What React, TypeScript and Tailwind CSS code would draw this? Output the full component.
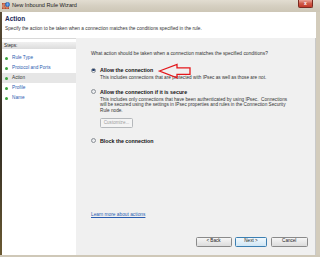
import React from 'react';

const steps = ['Rule Type', 'Protocol and Ports', 'Action', 'Profile', 'Name'];

const Radio = ({ checked }: { checked?: boolean }) => (
  <span className="flex h-[5px] w-[5px] shrink-0 items-center justify-center rounded-full border-[0.5px] border-[#8a8f96] bg-gradient-to-br from-[#d8dbe0] to-[#ffffff]">
    {checked && <span className="h-[2.5px] w-[2.5px] rounded-full bg-[#1f3a6a]" />}
  </span>
);

const WizButton = ({ label, primary, disabled }: { label: string; primary?: boolean; disabled?: boolean }) => (
  <div
    className={
      'flex h-[9.5px] items-center justify-center rounded-[1.5px] border-[0.7px] text-[4.6px] leading-none ' +
      (disabled
        ? 'border-[#b5b8bb] bg-[#f4f4f4] text-[#a0a0a0]'
        : primary
          ? 'border-[#3c7fb1] bg-gradient-to-b from-[#f2f9fd] to-[#cfe6f5] text-[#1a1a1a]'
          : 'border-[#8a8a8a] bg-gradient-to-b from-[#f6f6f6] to-[#dcdcdc] text-[#1a1a1a]')
    }
  >
    {label}
  </div>
);

const App: React.FC = () => {
  return (
    <div
      className="relative flex h-[257px] w-[320px] flex-col overflow-hidden bg-[#d6d0c2]"
      style={{ fontFamily: '"Liberation Sans", Arial, sans-serif' }}
    >
      {/* title bar */}
      <div className="flex h-[12px] shrink-0 items-start bg-gradient-to-b from-[#e2ddd1] via-[#d5cfc1] to-[#cdc6b6]">
        <div className="ml-[2px] mt-[2px] h-[8px] w-[8px]">
          <svg viewBox="0 0 8 8" width="8" height="8">
            <rect x="0" y="1" width="7" height="6" fill="#b94a2c" />
            <path d="M0 3h7M0 5h7M2 1v2M5 1v2M1 3v2M4 3v2M2 5v2M5 5v2" stroke="#f2d3b0" strokeWidth="0.5" />
            <circle cx="5.5" cy="2.5" r="2.2" fill="#3b7fd0" stroke="#1f4f9a" strokeWidth="0.4" />
            <path d="M4.2 2.2h2.6M5.5 0.5v4" stroke="#9fd0ff" strokeWidth="0.4" />
          </svg>
        </div>
        <span className="ml-[2px] mt-[3px] text-[5.6px] leading-none text-[#222]">New Inbound Rule Wizard</span>
        <div className="ml-auto mr-[7px] flex h-[7.5px] w-[15px] items-center justify-center rounded-b-[2px] border-[0.5px] border-t-0 border-[#7a2a20] bg-gradient-to-b from-[#e8a59a] via-[#cf5a48] to-[#c2382a]">
          <span className="text-[5px] font-bold leading-none text-white">x</span>
        </div>
      </div>

      <div className="flex min-h-0 flex-1">
        {/* left frame */}
        <div className="w-[2px] shrink-0 bg-gradient-to-b from-[#5a4c34] via-[#2e2a22] to-[#6b5a32]" />

        <div className="flex min-w-0 flex-1 flex-col">
          {/* header */}
          <div className="flex h-[26px] shrink-0 flex-col bg-white pl-[3px]">
            <div className="mt-[3px] text-[6.5px] font-bold leading-[7px] text-[#1e2a5a]">Action</div>
            <div className="mt-[4px] text-[4.75px] leading-[5px] text-[#333]">
              Specify the action to be taken when a connection matches the conditions specified in the rule.
            </div>
          </div>

          <div className="flex min-h-0 flex-1">
            {/* steps */}
            <div className="flex w-[74px] shrink-0 flex-col border-t-[0.5px] border-[#d8d8d8] bg-white pt-[3px]">
              <div className="flex h-[7px] items-center bg-gradient-to-b from-[#f0f0f0] to-[#dcdcdc] pl-[2px] text-[4.7px] text-[#222]">
                Steps:
              </div>
              <div className="mt-[4px] flex flex-col">
                {steps.map((s) => (
                  <div
                    key={s}
                    className={
                      'flex h-[10px] items-center gap-[4px] pl-[3px] text-[4.7px] ' +
                      (s === 'Action' ? 'bg-[#e6e6e6] text-[#333]' : 'text-[#2a5cb0]')
                    }
                  >
                    <span className="h-[3px] w-[3px] rounded-full bg-[#3aa53a]" />
                    {s}
                  </div>
                ))}
              </div>
            </div>

            {/* content */}
            <div className="flex min-w-0 flex-1 flex-col border-r-[0.5px] border-[#c9c9c9] bg-[#f0f0f0] pl-[15px] pr-[6px]">
              <div className="mt-[13px] text-[4.85px] leading-[6px] text-[#333]">
                What action should be taken when a connection matches the specified conditions?
              </div>

              <div className="mt-[10px] flex items-center gap-[4px]">
                <Radio checked />
                <span className="text-[5.3px] font-bold leading-[6px] text-[#111]">Allow the connection</span>
              </div>
              <div className="mt-[2px] pl-[9px] text-[4.7px] leading-[6px] text-[#333]">
                This includes connections that are protected with IPsec as well as those are not.
              </div>

              <div className="mt-[7.5px] flex items-center gap-[4px]">
                <Radio />
                <span className="text-[5.3px] font-bold leading-[6px] text-[#111]">Allow the connection if it is secure</span>
              </div>
              <div className="mt-[2px] w-[202px] pl-[9px] text-[4.7px] leading-[5.8px] text-[#333]">
                This includes only connections that have been authenticated by using IPsec.&nbsp; Connections will be
                secured using the settings in IPsec properties and rules in the Connection Security Rule node.
              </div>
              <div className="ml-[9px] mt-[4.5px] w-[33px]">
                <WizButton label="Customize..." disabled />
              </div>

              <div className="mt-[10px] flex items-center gap-[4px]">
                <Radio />
                <span className="text-[5.3px] font-bold leading-[6px] text-[#111]">Block the connection</span>
              </div>

              <div className="mt-auto text-[4.8px] leading-[6px] text-[#2a5db0] underline">Learn more about actions</div>

              <div className="mb-[8.5px] mt-[19px] flex justify-end gap-[3.5px] pr-[1px]">
                <div className="w-[36px]">
                  <WizButton label="< Back" />
                </div>
                <div className="w-[32px]">
                  <WizButton label="Next >" primary />
                </div>
                <div className="w-[37.5px]">
                  <WizButton label="Cancel" />
                </div>
              </div>
            </div>
          </div>
        </div>

        {/* right frame */}
        <div className="w-[4px] shrink-0 bg-[#d3ccbc]" />
      </div>

      {/* bottom frame */}
      <div className="h-[2px] shrink-0 bg-[#cfc8b8]" />

      {/* red annotation arrow */}
      <svg className="pointer-events-none absolute left-0 top-0" width="320" height="257" viewBox="0 0 320 257">
        <polygon
          points="159.5,71 177,64.5 177,67.8 190,67.8 190,74.3 177,74.3 177,77.8"
          fill="none"
          stroke="#e3171b"
          strokeWidth="1.3"
          strokeLinejoin="miter"
        />
      </svg>
    </div>
  );
};

export default App;
